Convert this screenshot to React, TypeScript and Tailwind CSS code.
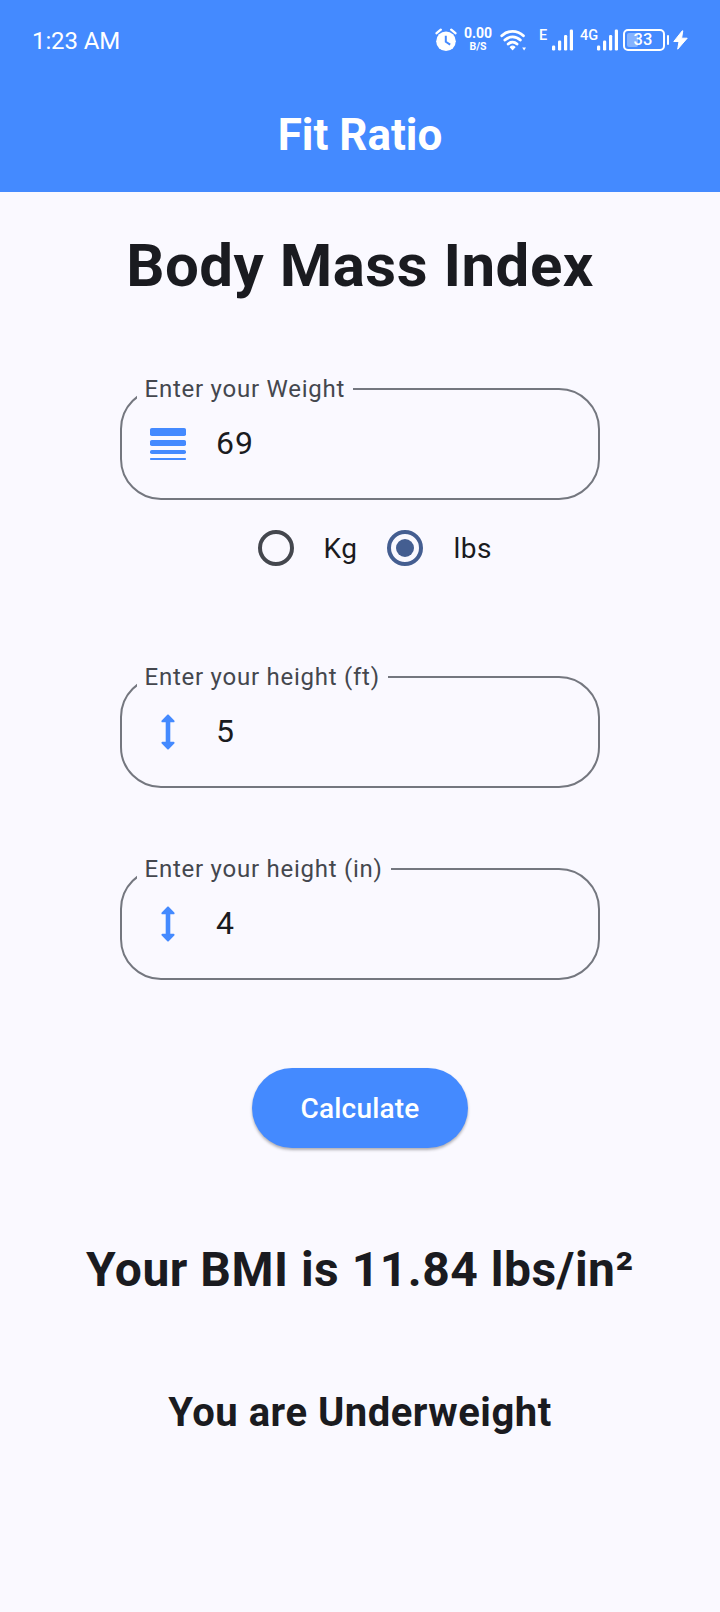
import { useState, type ReactNode } from "react";

function WeightIcon() {
  return (
    <svg viewBox="0 0 48 48" className="size-12 fill-[#448aff]">
      <rect x="6" y="8" width="36" height="8" rx="1.8" />
      <rect x="6" y="20" width="36" height="6" rx="1.8" />
      <rect x="6" y="30" width="36" height="4" rx="1.8" />
      <rect x="6" y="38" width="36" height="2" rx="0.8" />
    </svg>
  );
}

function HeightIcon() {
  return (
    <svg viewBox="0 0 24 24" className="size-12 fill-[#448aff]">
      <path d="M13.15 7.15h1.64c.45 0 .67-.6.35-.95l-2.79-2.85c-.2-.2-.51-.2-.71 0L8.86 6.2c-.32.35-.1.95.35.95h1.64v9.7H9.21c-.45 0-.67.6-.35.95l2.79 2.85c.2.2.51.2.71 0l2.79-2.85c.32-.35.09-.95-.35-.95h-1.65z" />
    </svg>
  );
}

function SignalBars() {
  return (
    <svg viewBox="0 0 21 22" className="h-[22px] w-[21px] fill-white">
      <rect x="0" y="16.5" width="3.2" height="5" rx="1.2" />
      <rect x="6" y="11.5" width="3.2" height="10" rx="1.2" />
      <rect x="12" y="6" width="3.2" height="15.5" rx="1.2" />
      <rect x="17.8" y="0.5" width="3.2" height="21" rx="1.2" />
    </svg>
  );
}

function StatusBar() {
  return (
    <div className="flex h-20 items-start justify-between pt-7 pr-8 pl-8 text-white">
      <span className="text-2xl leading-[26px] tracking-[-0.1px]">1:23 AM</span>
      <div className="flex h-6 items-start">
        <svg viewBox="0 0 22 24" className="h-6 w-[22px]">
          <circle cx="11" cy="13.3" r="9.8" fill="white" />
          <path d="M1.6 5.2 5.8 1.7M16.2 1.7l4.2 3.5" stroke="white" strokeWidth="2.4" strokeLinecap="round" />
          <path d="M10.8 7.8v6l4.4 2.8" fill="none" stroke="#448aff" strokeWidth="2" />
        </svg>
        <div className="ml-1.5 flex w-[30px] flex-col items-center font-bold">
          <span className="-mt-[3px] text-[14px] leading-4">0.00</span>
          <span className="text-[10.5px] leading-3">B/S</span>
        </div>
        <svg viewBox="0 0 27 24" className="ml-[7px] h-6 w-[27px]" fill="none" stroke="white" strokeWidth="2.9" strokeLinecap="round">
          <path d="M1.8 7.8C8 1.9 17.2 1.9 23.4 7.8M4.9 12c4.4-4.2 11-4.2 15.4 0M8.2 16c2.6-2.3 6.2-2.3 8.8 0" />
          <path d="M10.3 19.2c1.3-1.1 3.3-1.1 4.6 0L12.6 21.6z" fill="white" strokeWidth="1.2" strokeLinejoin="round" />
          <path d="M22.2 19.6h3.8L24.1 22.6z" fill="white" stroke="none" />
        </svg>
        <span className="ml-3 w-[13px] pt-px text-[14.5px] leading-[14px] font-medium">E</span>
        <div className="pt-px"><SignalBars /></div>
        <span className="ml-[7px] w-[17px] pt-px text-[14.5px] leading-[14px] font-medium">4G</span>
        <div className="pt-px"><SignalBars /></div>
        <div className="relative mt-px ml-[5px] flex h-[22px] w-[42px] items-center justify-center rounded-[5px] border-2 border-white">
          <div className="absolute top-[2px] left-[2px] h-[14px] w-[11px] rounded-[2px] bg-white/35" />
          <span className="relative -left-px text-[16.5px] leading-none font-medium">33</span>
        </div>
        <div className="mt-[7px] ml-[2px] h-[10px] w-[2px] rounded-full bg-white" />
        <svg viewBox="0 0 15 20" className="mt-[2px] ml-1 h-5 w-[15px] fill-white stroke-white">
          <path d="M9.3.8.8 11.5h5.2L4.7 19.2 14.2 8.2H8.6L9.8.8z" strokeLinejoin="round" />
        </svg>
      </div>
    </div>
  );
}

function Field({ label, value, icon }: { label: string; value: string; icon: ReactNode }) {
  return (
    <label className="relative flex h-28 w-[480px] items-center rounded-[41px] border-2 border-[#74777f] pl-[22px]">
      <span className="absolute -top-[14px] left-[15px] bg-[#faf9ff] pr-2 pl-[7.5px] text-2xl leading-[26px] tracking-[0.75px] whitespace-nowrap text-[#44474e]">
        {label}
      </span>
      {icon}
      <input
        defaultValue={value}
        className="mb-[2px] ml-6 h-12 w-80 bg-transparent text-[32px] tracking-[1px] text-[#1a1b20] outline-none"
      />
    </label>
  );
}

function Radio({ label, checked, onSelect }: { label: string; checked: boolean; onSelect: () => void }) {
  return (
    <button type="button" role="radio" aria-checked={checked} onClick={onSelect} className="flex items-center gap-[30px]">
      <span
        className={
          checked
            ? "flex size-9 items-center justify-center rounded-full border-4 border-[#445e91]"
            : "size-9 rounded-full border-4 border-[#44474e]"
        }
      >
        {checked && <span className="size-[18px] rounded-full bg-[#445e91]" />}
      </span>
      <span className="pt-[2px] text-[28px] leading-8 tracking-[0.5px]">{label}</span>
    </button>
  );
}

export default function App() {
  const [unit, setUnit] = useState("lbs");
  return (
    <div className="flex h-[1612px] w-[720px] flex-col bg-[#faf9ff] font-[Roboto,sans-serif] text-[#1a1b20]">
      <header className="h-48 bg-[#448aff]">
        <StatusBar />
        <h1 className="text-center text-[44px] leading-[110px] font-bold text-white">Fit Ratio</h1>
      </header>
      <main className="flex flex-col items-center">
        <h2 className="mt-[38px] text-[60px] leading-[72px] font-bold tracking-[0.5px]">Body Mass Index</h2>
        <div className="mt-[86px]">
          <Field label="Enter your Weight" value="69" icon={<WeightIcon />} />
        </div>
        <div role="radiogroup" className="mt-[30px] flex h-9 w-[480px] items-center gap-[30px] pl-[137.5px]">
          <Radio label="Kg" checked={unit === "Kg"} onSelect={() => setUnit("Kg")} />
          <Radio label="lbs" checked={unit === "lbs"} onSelect={() => setUnit("lbs")} />
        </div>
        <div className="mt-[110px] flex flex-col gap-20">
          <Field label="Enter your height (ft)" value="5" icon={<HeightIcon />} />
          <Field label="Enter your height (in)" value="4" icon={<HeightIcon />} />
        </div>
        <button
          type="button"
          className="mt-[88px] h-20 w-[216px] rounded-full bg-[#448aff] pt-[2px] text-[28px] font-medium tracking-[0.2px] text-white shadow-[0_2px_3px_rgba(0,0,0,0.3)]"
        >
          Calculate
        </button>
        <p className="mt-[92px] text-5xl leading-[60px] font-bold tracking-[0.5px]">Your BMI is 11.84 lbs/in²</p>
        <p className="mt-[89px] text-[40px] leading-[48px] font-bold tracking-[0.5px]">You are Underweight</p>
      </main>
    </div>
  );
}
